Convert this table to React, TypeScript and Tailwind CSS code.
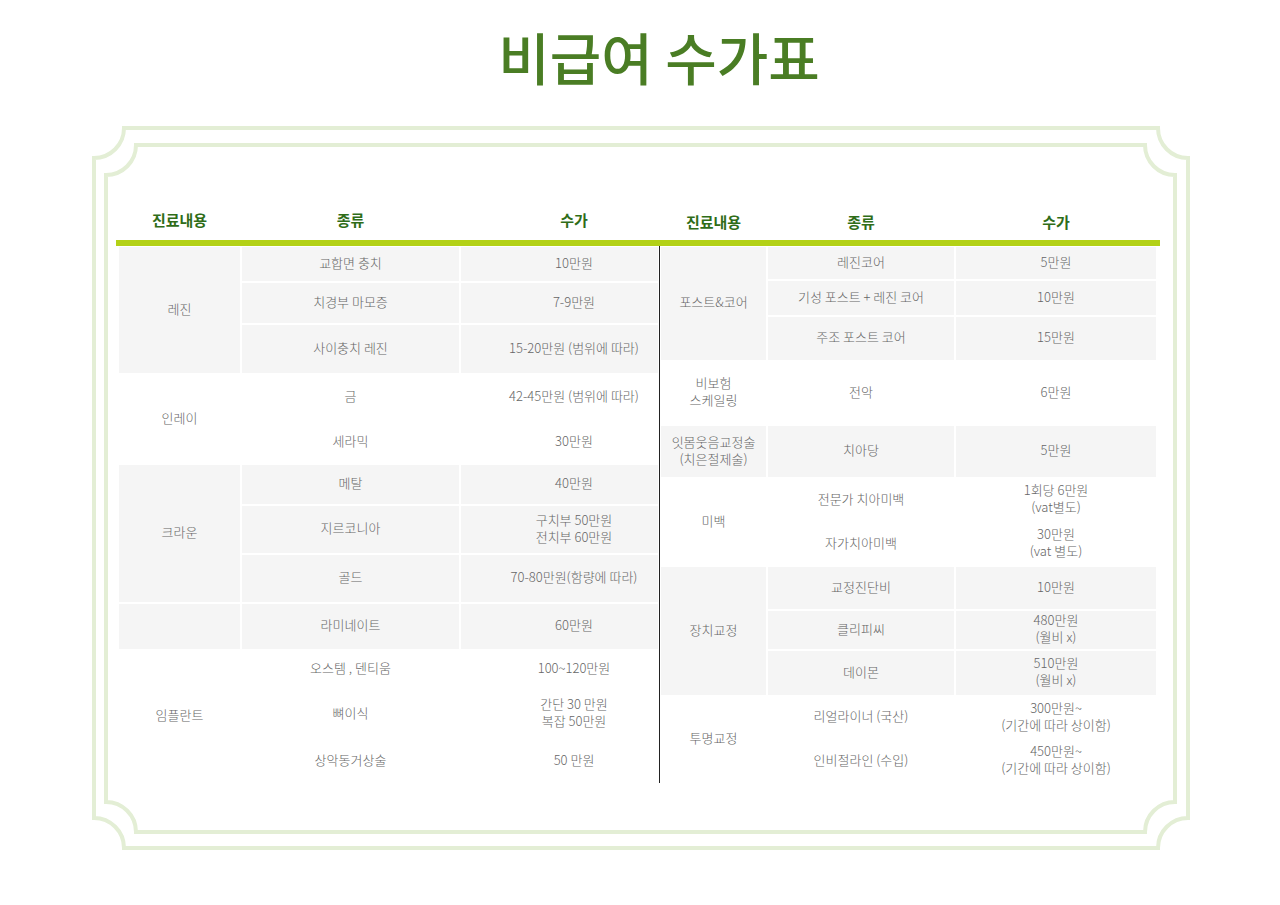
import React from "react";

const font = { fontFamily: '"Noto Sans CJK KR", "Noto Sans", sans-serif' };

type Cell = { text?: string; row: string; col: string; grey?: boolean; pl?: boolean };

// left table: 진료내용 / 종류 / 수가
const leftCells: Cell[] = [
  { text: "레진", row: "row-start-1 row-span-3", col: "col-start-1", grey: true },
  { text: "교합면 충치", row: "row-start-1", col: "col-start-2", grey: true },
  { text: "10만원", row: "row-start-1", col: "col-start-3", grey: true, pl: true },
  { text: "치경부 마모증", row: "row-start-2", col: "col-start-2", grey: true },
  { text: "7-9만원", row: "row-start-2", col: "col-start-3", grey: true, pl: true },
  { text: "사이충치 레진", row: "row-start-3", col: "col-start-2", grey: true },
  { text: "15-20만원 (범위에 따라)", row: "row-start-3", col: "col-start-3", grey: true, pl: true },
  { text: "인레이", row: "row-start-4 row-span-2", col: "col-start-1" },
  { text: "금", row: "row-start-4", col: "col-start-2" },
  { text: "42-45만원 (범위에 따라)", row: "row-start-4", col: "col-start-3", pl: true },
  { text: "세라믹", row: "row-start-5", col: "col-start-2" },
  { text: "30만원", row: "row-start-5", col: "col-start-3", pl: true },
  { text: "크라운", row: "row-start-6 row-span-3", col: "col-start-1", grey: true },
  { text: "메탈", row: "row-start-6", col: "col-start-2", grey: true },
  { text: "40만원", row: "row-start-6", col: "col-start-3", grey: true, pl: true },
  { text: "지르코니아", row: "row-start-7", col: "col-start-2", grey: true },
  { text: "구치부 50만원\n전치부 60만원", row: "row-start-7", col: "col-start-3", grey: true, pl: true },
  { text: "골드", row: "row-start-8", col: "col-start-2", grey: true },
  { text: "70-80만원(함량에 따라)", row: "row-start-8", col: "col-start-3", grey: true, pl: true },
  { text: "", row: "row-start-9", col: "col-start-1", grey: true },
  { text: "라미네이트", row: "row-start-9", col: "col-start-2", grey: true },
  { text: "60만원", row: "row-start-9", col: "col-start-3", grey: true, pl: true },
  { text: "임플란트", row: "row-start-10 row-span-3", col: "col-start-1" },
  { text: "오스템 , 덴티움", row: "row-start-10", col: "col-start-2" },
  { text: "100~120만원", row: "row-start-10", col: "col-start-3", pl: true },
  { text: "뼈이식", row: "row-start-11", col: "col-start-2" },
  { text: "간단 30 만원\n복잡 50만원", row: "row-start-11", col: "col-start-3", pl: true },
  { text: "상악동거상술", row: "row-start-12", col: "col-start-2" },
  { text: "50 만원", row: "row-start-12", col: "col-start-3", pl: true },
];

const rightCells: Cell[] = [
  { text: "포스트&코어", row: "row-start-1 row-span-3", col: "col-start-1", grey: true },
  { text: "레진코어", row: "row-start-1", col: "col-start-2", grey: true },
  { text: "5만원", row: "row-start-1", col: "col-start-3", grey: true },
  { text: "기성 포스트 + 레진 코어", row: "row-start-2", col: "col-start-2", grey: true },
  { text: "10만원", row: "row-start-2", col: "col-start-3", grey: true },
  { text: "주조 포스트 코어", row: "row-start-3", col: "col-start-2", grey: true },
  { text: "15만원", row: "row-start-3", col: "col-start-3", grey: true },
  { text: "비보험\n스케일링", row: "row-start-4", col: "col-start-1" },
  { text: "전악", row: "row-start-4", col: "col-start-2" },
  { text: "6만원", row: "row-start-4", col: "col-start-3" },
  { text: "잇몸웃음교정술\n(치은절제술)", row: "row-start-5", col: "col-start-1", grey: true },
  { text: "치아당", row: "row-start-5", col: "col-start-2", grey: true },
  { text: "5만원", row: "row-start-5", col: "col-start-3", grey: true },
  { text: "미백", row: "row-start-6 row-span-2", col: "col-start-1" },
  { text: "전문가 치아미백", row: "row-start-6", col: "col-start-2" },
  { text: "1회당 6만원\n(vat별도)", row: "row-start-6", col: "col-start-3" },
  { text: "자가치아미백", row: "row-start-7", col: "col-start-2" },
  { text: "30만원\n(vat 별도)", row: "row-start-7", col: "col-start-3" },
  { text: "장치교정", row: "row-start-8 row-span-3", col: "col-start-1", grey: true },
  { text: "교정진단비", row: "row-start-8", col: "col-start-2", grey: true },
  { text: "10만원", row: "row-start-8", col: "col-start-3", grey: true },
  { text: "클리피씨", row: "row-start-9", col: "col-start-2", grey: true },
  { text: "480만원\n(월비 x)", row: "row-start-9", col: "col-start-3", grey: true },
  { text: "데이몬", row: "row-start-10", col: "col-start-2", grey: true },
  { text: "510만원\n(월비 x)", row: "row-start-10", col: "col-start-3", grey: true },
  { text: "투명교정", row: "row-start-11 row-span-2", col: "col-start-1" },
  { text: "리얼라이너 (국산)", row: "row-start-11", col: "col-start-2" },
  { text: "300만원~\n(기간에 따라 상이함)", row: "row-start-11", col: "col-start-3" },
  { text: "인비절라인 (수입)", row: "row-start-12", col: "col-start-2" },
  { text: "450만원~\n(기간에 따라 상이함)", row: "row-start-12", col: "col-start-3" },
];

function CellBox({ c }: { c: Cell }) {
  return (
    <div
      className={`${c.row} ${c.col} flex items-center justify-center border border-white pb-[4px] text-center whitespace-pre-line text-[13px] leading-[17px] font-light text-[#666666] ${
        c.grey ? "bg-[#f5f5f5]" : ""
      } ${c.pl ? "pl-[29px]" : ""}`}
    >
      {c.text}
    </div>
  );
}

function Frame() {
  const path = (x0: number, y0: number, x1: number, y1: number, r: number) =>
    `M ${x0 + r} ${y0} H ${x1 - r} A ${r} ${r} 0 0 0 ${x1} ${y0 + r} V ${y1 - r} A ${r} ${r} 0 0 0 ${x1 - r} ${y1} H ${x0 + r} A ${r} ${r} 0 0 0 ${x0} ${y1 - r} V ${y0 + r} A ${r} ${r} 0 0 0 ${x0 + r} ${y0} Z`;
  return (
    <svg className="absolute inset-0" width="1098" height="724" viewBox="0 0 1098 724" fill="none">
      <path d={path(2, 2, 1096, 722, 30)} stroke="#e3eed5" strokeWidth="4" />
      <path d={path(14, 19, 1083, 706, 30)} stroke="#e3eed5" strokeWidth="4" />
    </svg>
  );
}

export default function App() {
  return (
    <div className="min-h-[905px] w-[1280px] bg-white" style={font}>
      {/* Title */}
      <h1 className="pt-[28px] pl-[38px] text-center text-[56px] leading-[56px] font-medium text-[#4a7d24]">
        비급여 수가표
      </h1>

      {/* Framed table */}
      <div className="relative mt-[42px] ml-[92px] h-[724px] w-[1098px]">
        <Frame />
        <div className="relative pt-[74px] pl-[24px] pr-[30px]">
          {/* Header */}
          <div className="flex h-[40px] text-[15px] font-bold text-[#2f6d18]">
            <div className="flex w-[543px] items-center pl-[2px]">
              <div className="w-[123px] text-center">진료내용</div>
              <div className="w-[219px] text-center">종류</div>
              <div className="w-[199px] pl-[29px] text-center">수가</div>
            </div>
            <div className="flex w-[501px] items-center pt-[4px] pl-[1px]">
              <div className="w-[107px] text-center">진료내용</div>
              <div className="w-[188px] text-center">종류</div>
              <div className="w-[202px] text-center">수가</div>
            </div>
          </div>
          <div className="h-[6px] bg-[#b3d117]" />

          {/* Tables */}
          <div className="flex">
            <div className="w-[543px] pl-[2px]">
              <div className="grid grid-cols-[123px_219px_199px] grid-rows-[36px_42px_50px_46px_44px_41px_49px_49px_47px_38px_52px_43px]">
                {leftCells.map((c, i) => (
                  <CellBox key={i} c={c} />
                ))}
              </div>
            </div>
            <div className="w-[501px] border-l border-[#222] pr-[3px]">
              <div className="grid grid-cols-[107px_188px_202px] grid-rows-[34px_36px_45px_64px_53px_44px_44px_44px_40px_46px_43px_44px]">
                {rightCells.map((c, i) => (
                  <CellBox key={i} c={c} />
                ))}
              </div>
            </div>
          </div>
        </div>
      </div>
    </div>
  );
}
